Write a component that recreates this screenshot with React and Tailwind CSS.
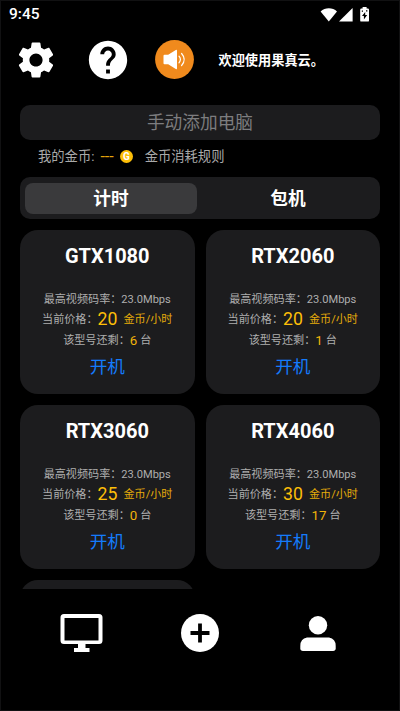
const machines = [
  { name: "GTX1080", price: 20, left: 6 },
  { name: "RTX2060", price: 20, left: 1 },
  { name: "RTX3060", price: 25, left: 0 },
  { name: "RTX4060", price: 30, left: 17 },
];

function StatusBar() {
  return (
    <div className="flex h-[27px] items-center justify-between pl-[8px] pr-[30px] text-white">
      <span className="text-[15.500px] font-medium leading-[27px]">9:45</span>
      <svg className="-mt-[1px] h-[15px] w-[49px]" viewBox="0 0 49 15" fill="currentColor">
        <path d="M0.600 4.500C3 2.500 5.700 1.300 8.800 1.300S14.800 2.500 17 4.500L8.800 14.600Z" />
        <path d="M32.600 1v13.600H19Z" />
        <path d="M42.600 0h4v1.500h1.200q1.200 0 1.200 1.200v10.700q0 1.200-1.200 1.200h-6.400q-1.200 0-1.200-1.200V2.700q0-1.200 1.200-1.200h1.200Z" />
        <path fill="#000" d="M45.200 5l-3.200 4h1.900v3.500l3.300-4.500h-2ZM41.800 3.500h1.200v1.200h-1.200ZM46 3.200h1.400v1.300H46Z" />
      </svg>
    </div>
  );
}

function Header() {
  return (
    <header className="flex h-[39px] items-center pl-[13px] text-white">
      <svg className="size-[44px] shrink-0" viewBox="0 0 24 24" fill="currentColor">
        <path d="M19.14 12.94c.04-.3.06-.61.06-.94 0-.32-.02-.64-.07-.94l2.030-1.580c.18-.14.23-.41.12-.61l-1.920-3.320c-.12-.22-.37-.29-.59-.22l-2.390.96c-.5-.38-1.030-.7-1.620-.94l-.36-2.540c-.04-.24-.24-.41-.48-.41h-3.840c-.24 0-.43.17-.47.41l-.36 2.540c-.59.24-1.130.57-1.620.94l-2.390-.96c-.22-.08-.47 0-.59.22L2.740 8.870c-.12.21-.08.47.12.61l2.030 1.580c-.05.3-.09.63-.09.94s.02.64.07.94l-2.030 1.580c-.18.14-.23.41-.12.61l1.920 3.320c.12.22.37.29.59.22l2.390-.96c.5.38 1.030.7 1.620.94l.36 2.540c.05.24.24.41.48.41h3.840c.24 0 .44-.17.47-.41l.36-2.540c.59-.24 1.130-.56 1.620-.94l2.390.96c.22.08.47 0 .59-.22l1.920-3.320c.12-.22.07-.47-.12-.61l-2.010-1.580zM12 15.600c-1.980 0-3.600-1.620-3.600-3.600s1.620-3.600 3.600-3.600 3.600 1.620 3.600 3.600-1.620 3.600-3.600 3.600z" />
      </svg>
      <svg className="ml-[27.300px] size-[46px] shrink-0" viewBox="0 0 24 24" fill="currentColor">
        <path d="M12 2C6.480 2 2 6.480 2 12s4.480 10 10 10 10-4.480 10-10S17.520 2 12 2zm1 17h-2v-2h2v2zm2.070-7.750l-.9.920C13.450 12.900 13 13.500 13 15h-2v-.5c0-1.100.45-2.100 1.170-2.830l1.240-1.260c.37-.36.59-.86.59-1.410 0-1.100-.9-2-2-2s-2 .9-2 2H8c0-2.210 1.790-4 4-4s4 1.790 4 4c0 .88-.36 1.680-.93 2.250z" />
      </svg>
      <svg className="ml-[24.200px] size-[39px] shrink-0" viewBox="0 0 39 39">
        <circle cx="19.500" cy="19.500" r="19.400" fill="#f08a1d" />
        <path d="M9.500 14.800h3.700L20.800 10q1.200-.6 1.200.7v17.600q0 1.300-1.200.7L13.200 24.200H9.500q-1 0-1-1v-7.400q0-1 1-1Z" fill="#fff" />
        <path d="M24 16.200q2.800 3.300 0 6.600M26.600 13.500q5.200 6 0 12" fill="none" stroke="#fff" strokeWidth="1.200" strokeLinecap="round" />
      </svg>
      <span className="ml-[24px] whitespace-nowrap pt-[2px] text-[13.200px] font-bold">欢迎使用果真云。</span>
    </header>
  );
}

function MachineCard({ name, price, left }) {
  return (
    <article className="flex h-[164px] flex-col items-center rounded-[18px] bg-[#1c1c1e] pt-[13px] text-[11.100px] text-[#aeaeae]">
      <h2 className="h-[27px] text-[20px] font-bold leading-[27px] text-white">{name}</h2>
      <p className="mt-[20px] flex h-5 items-center whitespace-nowrap">最高视频码率：23.0Mbps</p>
      <p className="flex h-5 items-center whitespace-nowrap">
        当前价格：
        <span className="pb-[2px] text-[17.700px] text-[#fdbf08]">{price}</span>
        <span className="ml-[6px] text-[#e5ac0a]">金币/小时</span>
      </p>
      <p className="flex h-[22px] items-center whitespace-nowrap">
        该型号还剩：
        <span className="text-[13.300px] text-[#f0b40a]">{left}</span>
        <span className="ml-[3px]">台</span>
      </p>
      <button className="mt-[1px] h-[28px] text-[17.600px] leading-[28px] text-[#147bfb]">开机</button>
    </article>
  );
}

function BottomNav() {
  return (
    <nav className="flex h-[88px] items-center pl-[59px] text-white">
      <svg className="h-[38px] w-[43px]" viewBox="0 0 43 38" fill="currentColor">
        <path fillRule="evenodd" d="M4 0h35q3.500 0 3.500 3.500v23q0 3.500-3.500 3.500H25.500v4h4v4H14v-4h4v-4H4Q.5 30 .5 26.500v-23Q.5 0 4 0Zm.5 4v22.500h34V4Z" />
      </svg>
      <svg className="ml-[77.500px] size-[38px]" viewBox="0 0 38 38">
        <circle cx="19" cy="19" r="19" fill="#fff" />
        <path d="M19 9.500v19M9.500 19h19" stroke="#000" strokeWidth="3.800" />
      </svg>
      <svg className="ml-[81px] h-[35px] w-[36px]" viewBox="0 0 36 35" fill="currentColor">
        <circle cx="18" cy="9.200" r="9.200" />
        <path d="M7 21.500h22q6.700 1 6.700 8.500v2.300q0 2.700-2.700 2.700H3Q.3 35 .3 32.300V30Q.3 22.500 7 21.500Z" />
      </svg>
    </nav>
  );
}

export default function App() {
  return (
    <div className="flex h-[711px] w-[400px] flex-col overflow-hidden border border-[#111112] bg-black font-[Roboto,'Noto_Sans_CJK_SC',sans-serif]">
      <StatusBar />
      <div className="h-[12px] shrink-0" />
      <Header />
      <main className="flex h-[510px] shrink-0 flex-col overflow-hidden px-[19px] pt-[26px]">
        <button className="h-[35px] shrink-0 rounded-[10px] bg-[#1c1c1e] pt-[2px] text-[17.700px] leading-[33px] text-[#7d7d7f]">
          手动添加电脑
        </button>
        <div className="flex h-[33px] shrink-0 items-center whitespace-nowrap pl-[18px] text-[13.300px] text-[#a9a9a9]">
          <span>我的金币:</span>
          <span className="ml-[6px] text-[16px] leading-none text-[#e5a50a]">---</span>
          <span className="ml-[6px] flex size-[13.500px] items-center justify-center rounded-full bg-[#fdbf08] text-[10px] font-bold leading-none text-white">
            G
          </span>
          <span className="ml-[11.500px]">金币消耗规则</span>
        </div>
        <div className="mt-[4px] flex h-[42px] shrink-0 rounded-[10px] bg-[#1c1c1e] px-[5px] py-[5.500px] text-[17.700px] font-bold text-white">
          <button className="w-[172px] rounded-[8px] bg-[#3a3a3c] pt-[2px]">计时</button>
          <button className="flex-1 pl-[4px] pt-[2px]">包机</button>
        </div>
        <section className="mt-[11px] grid shrink-0 grid-cols-2 gap-x-[11px] gap-y-[11px]">
          {machines.map((m) => (
            <MachineCard key={m.name} {...m} />
          ))}
          <div className="h-[30px] rounded-t-[18px] bg-[#1c1c1e]" />
        </section>
      </main>
      <BottomNav />
    </div>
  );
}
